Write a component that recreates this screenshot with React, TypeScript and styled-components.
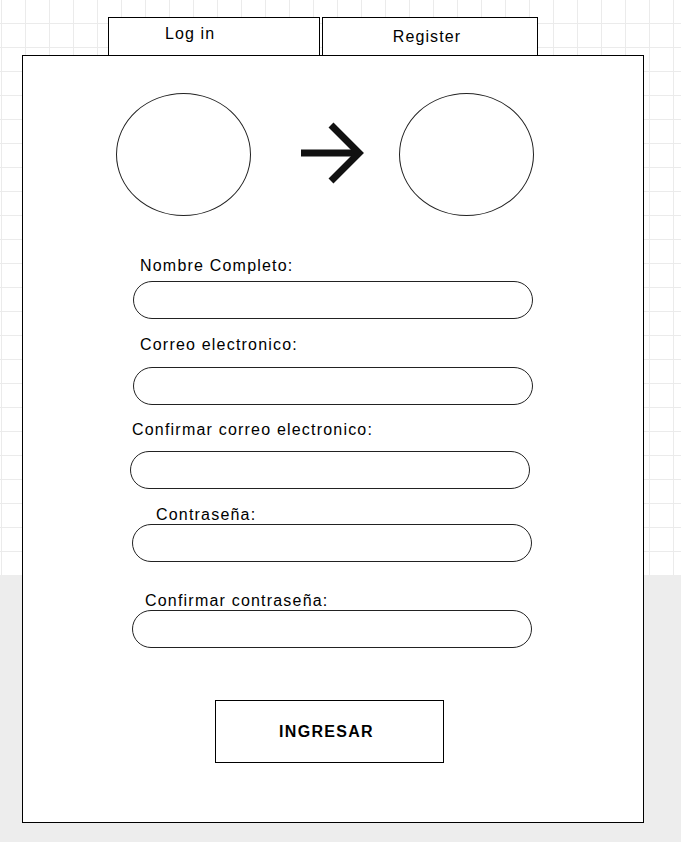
import React, { FC } from 'react';
import styled, { createGlobalStyle } from 'styled-components';

const GlobalStyle = createGlobalStyle`
  html, body {
    margin: 0;
    padding: 0;
  }
  body {
    font-family: "Liberation Sans", Arial, sans-serif;
    color: #000;
  }
`;

const Canvas = styled.div`
  width: 681px;
  height: 842px;
  overflow: hidden;
  box-sizing: border-box;
  padding: 17px 0 0 22px;
  background-color: #fff;
  background-image:
    linear-gradient(to bottom, transparent 575px, #ededed 575px),
    linear-gradient(to bottom, #ebebeb 1px, transparent 1px),
    linear-gradient(to right, #ebebeb 1px, transparent 1px);
  background-size: 100% 100%, 24px 24px, 24px 24px;
  background-position: 0 0, 0 23px, 1px 0;
`;

const TabRow = styled.div`
  display: flex;
  gap: 2px;
  margin-left: 86px;
`;

const Tab = styled.div<{ $width: number; $offset?: number }>`
  box-sizing: border-box;
  width: ${(p) => p.$width}px;
  height: 38px;
  border: 1px solid #000;
  border-bottom: none;
  background: #fff;
  display: flex;
  font-size: 16px;
  line-height: 18px;
  letter-spacing: 1.1px;
  ${(p) =>
    p.$offset !== undefined
      ? `padding: 7px 0 0 ${p.$offset}px; align-items: flex-start;`
      : `justify-content: center; align-items: center; padding-right: 6px;`}
`;

const Panel = styled.div`
  box-sizing: border-box;
  width: 622px;
  height: 768px;
  border: 1px solid #000;
  background: #fff;
  display: flex;
  flex-direction: column;
`;

const AvatarRow = styled.div`
  display: flex;
  align-items: center;
  padding: 37px 0 0 93px;
`;

const Avatar = styled.div`
  box-sizing: border-box;
  width: 135px;
  height: 123px;
  border: 1px solid #222;
  border-radius: 50%;
`;

const ArrowIcon = styled.svg`
  display: block;
  margin: 0 33px 0 47px;
`;

const Field = styled.div<{ $top: number }>`
  display: flex;
  flex-direction: column;
  align-items: flex-start;
  margin-top: ${(p) => p.$top}px;
`;

const Label = styled.label<{ $left: number; $gap: number }>`
  margin-left: ${(p) => p.$left}px;
  margin-bottom: ${(p) => p.$gap}px;
  font-size: 16px;
  line-height: 18px;
  letter-spacing: 1.2px;
`;

const Input = styled.div<{ $left: number }>`
  box-sizing: border-box;
  width: 400px;
  height: 38px;
  margin-left: ${(p) => p.$left}px;
  border: 1px solid #222;
  border-radius: 19px;
  background: #fff;
`;

const SubmitButton = styled.button`
  box-sizing: border-box;
  width: 229px;
  height: 63px;
  margin: 52px 0 0 192px;
  border: 1px solid #000;
  background: #fff;
  padding: 0 6px 0 0;
  font-family: "Liberation Sans", Arial, sans-serif;
  font-size: 16px;
  font-weight: bold;
  letter-spacing: 1.3px;
  color: #000;
`;

const fields = [
  { label: 'Nombre Completo:', top: 41, labelLeft: 117, gap: 6, inputLeft: 110 },
  { label: 'Correo electronico:', top: 17, labelLeft: 117, gap: 13, inputLeft: 110 },
  { label: 'Confirmar correo electronico:', top: 16, labelLeft: 109, gap: 12, inputLeft: 107 },
  { label: 'Contraseña:', top: 17, labelLeft: 133, gap: 0, inputLeft: 109 },
  { label: 'Confirmar contraseña:', top: 30, labelLeft: 122, gap: 0, inputLeft: 109 },
];

const Arrow: FC = () => (
  <ArrowIcon width="68" height="66" viewBox="0 0 68 66">
    <line x1="3" y1="31" x2="60" y2="31" stroke="#111" strokeWidth="7" />
    <polyline
      points="33,3 61,31 33,59"
      fill="none"
      stroke="#111"
      strokeWidth="7"
      strokeLinejoin="miter"
    />
  </ArrowIcon>
);

const App: FC = () => (
  <>
    <GlobalStyle />
    <Canvas>
      <TabRow>
        <Tab $width={212} $offset={56}>
          Log in
        </Tab>
        <Tab $width={216}>Register</Tab>
      </TabRow>
      <Panel>
        <AvatarRow>
          <Avatar />
          <Arrow />
          <Avatar />
        </AvatarRow>

        {fields.map((f) => (
          <Field key={f.label} $top={f.top}>
            <Label $left={f.labelLeft} $gap={f.gap}>
              {f.label}
            </Label>
            <Input $left={f.inputLeft} />
          </Field>
        ))}

        <SubmitButton>INGRESAR</SubmitButton>
      </Panel>
    </Canvas>
  </>
);

export default App;
